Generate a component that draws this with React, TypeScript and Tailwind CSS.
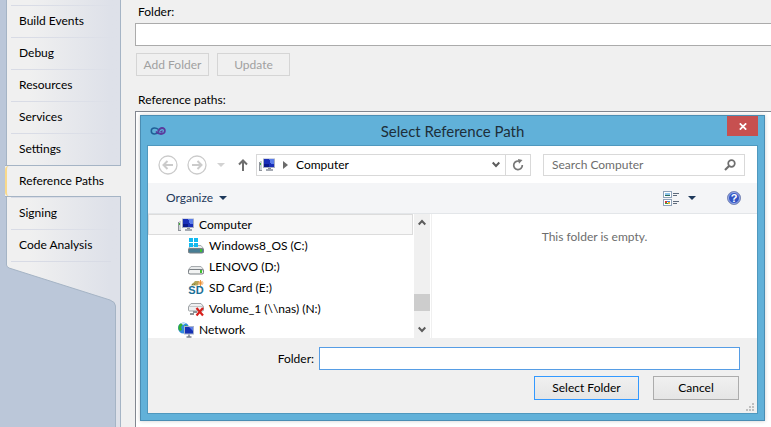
import React from "react";

const sections = [
  "Build Events",
  "Debug",
  "Resources",
  "Services",
  "Settings",
  "Reference Paths",
  "Signing",
  "Code Analysis",
];

function ComputerIcon() {
  return (
    <svg width="16" height="16" viewBox="0 0 16 16" shapeRendering="crispEdges" aria-hidden="true">
      <rect x="0" y="5" width="3" height="9" fill="#8f949b" />
      <rect x="1" y="4" width="2" height="9" fill="#cfd3d7" />
      <rect x="1" y="6" width="1" height="2" fill="#3fae3a" />
      <rect x="4" y="1" width="12" height="10" fill="#a9b0c2" />
      <rect x="4" y="1" width="12" height="1" fill="#d3d7e2" />
      <rect x="5" y="2" width="10" height="8" fill="#1a2fb8" />
      <path d="M10 2h5v5h-3z" fill="#5b7eea" />
      <path d="M5 7h5v3H5z" fill="#0b1a8c" />
      <rect x="9" y="11" width="3" height="1" fill="#8a8f99" />
      <rect x="7" y="12" width="7" height="2" fill="#a4a9b2" />
    </svg>
  );
}

function DriveBody({ color }: { color: string }) {
  return (
    <>
      <path d="M3 7.500h10l2.500 3v4h-15v-4z" fill="#e8eaeb" stroke="#a9adb0" />
      <rect x=".5" y="10.500" width="15" height="4.500" rx="1.500" fill={color} stroke="#7b8085" />
      <rect x="12" y="11" width="2" height="3" fill="#3fc030" />
    </>
  );
}

function WindowsDriveIcon() {
  return (
    <svg width="16" height="16" viewBox="0 0 16 16" aria-hidden="true">
      <DriveBody color="#477d94" />
      <path d="M1 0h4v4H1zM6 0h4v4H6zM1 5h4v4H1zM6 5h4v4H6z" fill="#12b9f0" />
    </svg>
  );
}

function DriveIcon() {
  return (
    <svg width="16" height="16" viewBox="0 0 16 16" aria-hidden="true">
      <DriveBody color="#f2f3f3" />
    </svg>
  );
}

function SdIcon() {
  return (
    <svg className="overflow-visible" width="16" height="16" viewBox="0 0 16 16" aria-hidden="true">
      <path d="M3 5.500L7 1h4l-1 4.500z" fill="#b3a85c" />
      <path d="M4 5l1-1.500M6 5l1-1.500" stroke="#7d7433" />
      <path d="M12.500 0v6M9.500 3h6M10.500 1l4 4M14.500 1l-4 4" stroke="#ea8b2d" strokeWidth=".9" />
      <text
        x="8"
        y="14"
        textAnchor="middle"
        className="fill-[#1b6f97] font-['Liberation_Sans',sans-serif] text-[11px] font-bold"
      >
        SD
      </text>
    </svg>
  );
}

function OfflineDriveIcon() {
  return (
    <svg width="16" height="16" viewBox="0 0 16 16" aria-hidden="true">
      <path d="M3 2.500h10l2.500 3v3.500q0 1-1 1h-13q-1 0-1-1V5.500z" fill="#eeeff0" stroke="#9fa3a6" />
      <path d="M1 5.500h14" stroke="#c4c7c9" />
      <path d="M5 10h4v2H6v2H2v-2h3z" fill="#8f9396" />
      <path d="M8.500 7l6.500 7.500M15 7l-6.500 7.500" stroke="#d8201c" strokeWidth="2.200" />
    </svg>
  );
}

function NetworkIcon() {
  return (
    <svg width="16" height="16" viewBox="0 0 16 16" aria-hidden="true">
      <circle cx="5.500" cy="6" r="5.500" fill="#2f8be0" />
      <path d="M1 3c2-2 3-2 4-1L4 4 3 5l1 3-2 1C0 8 0 5 1 3zM7 3l3 1v2L7 6z" fill="#35b12d" />
      <path d="M3 1.200c2-1 4-1 5 0L5 3z" fill="#c8e6f8" />
      <rect x="6" y="4" width="10" height="8.500" fill="#a9b3ca" />
      <rect x="7" y="5" width="8" height="6.500" fill="#1630b4" />
      <path d="M11 5h4v4z" fill="#5d7fe8" />
      <path d="M11 12.500v2M8.500 15h5" stroke="#7d8490" strokeWidth="1.500" />
    </svg>
  );
}

function Chevron({ up = false }: { up?: boolean }) {
  return (
    <svg width="8" height="7" viewBox="0 0 8 7" aria-hidden="true">
      <path d={up ? "M.7 5.500L4 2l3.300 3.500" : "M.7 1.500L4 5l3.300-3.500"} fill="none" stroke="#5c5c5c" strokeWidth="2" />
    </svg>
  );
}

function NavArrow({ back = false }: { back?: boolean }) {
  return (
    <svg width="20" height="20" viewBox="0 0 20 20" fill="none" stroke="#cbcbcb" aria-hidden="true">
      <circle cx="10" cy="10" r="9" strokeWidth="1.300" />
      <path d={back ? "M15 10H6M9.500 6L5.500 10l4 4" : "M5 10h9M10.500 6l4 4-4 4"} strokeWidth="2" />
    </svg>
  );
}

const places = [
  { name: "Computer", icon: <ComputerIcon />, root: true, selected: true },
  { name: "Windows8_OS (C:)", icon: <WindowsDriveIcon /> },
  { name: "LENOVO (D:)", icon: <DriveIcon /> },
  { name: "SD Card (E:)", icon: <SdIcon /> },
  { name: "Volume_1 (\\\\nas) (N:)", icon: <OfflineDriveIcon /> },
  { name: "Network", icon: <NetworkIcon />, root: true },
];

function Sidebar() {
  return (
    <aside className="flex w-[121px] shrink-0 flex-col bg-[#bbc7d9] pl-[6px]">
      <nav className="bg-linear-to-r from-[#f0f0f0] from-20% to-[#dee1e9] to-90%">
        <ul>
          <li className="h-[5px] border-x border-[#a5b4c5]" />
          {sections.map((name) =>
            name === "Reference Paths" ? (
              <li key={name} className="-ml-px h-8 border-y border-[#a5b4c5] bg-[#f0f0f0]">
                <a
                  href="#reference-paths"
                  aria-current="page"
                  className="flex h-full items-center rounded-l-sm border-l-2 border-[#f8d98c] pl-3"
                >
                  {name}
                </a>
              </li>
            ) : (
              <li key={name} className="flex h-8 flex-col border-x border-[#a5b4c5]">
                <span className="ml-1 h-px bg-linear-to-r from-[#d8dbe5] to-[#dee1e9]" />
                <a href="#section" className="flex flex-1 items-center pb-0.5 pl-3">
                  {name}
                </a>
              </li>
            ),
          )}
        </ul>
      </nav>
      <svg className="block h-[166px] w-[115px] shrink-0" viewBox="0 0 115 166" aria-hidden="true">
        <defs>
          <linearGradient id="tabFade" gradientUnits="userSpaceOnUse" x1="0" x2="115">
            <stop offset=".2" stopColor="#f0f0f0" />
            <stop offset=".9" stopColor="#dee1e9" />
          </linearGradient>
        </defs>
        <path
          d="M.5 -1V4Q.5 5.500 3 7L104 39Q109.500 41 109.500 45V167H114.500V-1"
          fill="url(#tabFade)"
          stroke="#a5b4c5"
        />
        <path d="M5 .5H105" stroke="#d8dbe5" />
      </svg>
    </aside>
  );
}

function TitleBar() {
  return (
    <header className="grid h-[29px] grid-cols-[1fr_auto_1fr] items-center">
      <svg className="ml-[3px]" width="16" height="8" viewBox="0 0 16 8" fill="none" aria-hidden="true">
        <path d="M8.500 2.500C7 1.200 6 1 4.500 1 .2 1 .2 7 4.500 7 6.500 7 8 6 9 4.500" stroke="#1f5f96" strokeWidth="1.500" />
        <path d="M6 4.500C7.500 6.500 9 7 11 7c5 0 5-6 1-6C10 1 9 2.500 8 4.500" stroke="#5a3a9c" strokeWidth="1.800" />
        <path d="M9.500 5l3-2v3z" fill="#5a3a9c" />
      </svg>
      <h1 className="text-[15px] leading-5 text-[#1d2f3a]">Select Reference Path</h1>
      <button
        type="button"
        aria-label="Close"
        className="flex h-5 w-[31px] items-center justify-center self-start justify-self-end bg-[#c75050]"
      >
        <svg width="8" height="7" viewBox="0 0 8 7" aria-hidden="true">
          <path d="M.8 .3l6.400 6.400M7.200 .3L.8 6.700" stroke="#fff" strokeWidth="1.700" />
        </svg>
      </button>
    </header>
  );
}

function NavigationBar() {
  return (
    <div className="flex h-[37px] items-center bg-white pr-3 pl-[10px]">
      <button type="button" aria-label="Back">
        <NavArrow back />
      </button>
      <button type="button" aria-label="Forward" className="ml-[9px]">
        <NavArrow />
      </button>
      <button type="button" aria-label="Recent locations" className="ml-[10px]">
        <svg width="8" height="4" viewBox="0 0 8 4" aria-hidden="true">
          <path d="M0 0h8L4 4z" fill="#d2d2d2" />
        </svg>
      </button>
      <button type="button" aria-label="Up" className="ml-[13px]">
        <svg width="10" height="12" viewBox="0 0 10 12" fill="none" stroke="#6e6e6e" strokeWidth="2" aria-hidden="true">
          <path d="M5 12V2M1 5.500L5 1.500l4 4" />
        </svg>
      </button>
      <div className="ml-2 flex h-[22px] min-w-0 flex-1 items-center border border-[#d9d9d9] pl-[2px]">
        <ComputerIcon />
        <svg className="ml-2" width="5" height="8" viewBox="0 0 5 8" aria-hidden="true">
          <path d="M0 0l5 4-5 4z" fill="#6b6b6b" />
        </svg>
        <button type="button" className="ml-2 flex-1 text-left">
          Computer
        </button>
        <button type="button" aria-label="Previous locations" className="px-[5px]">
          <Chevron />
        </button>
        <button
          type="button"
          aria-label="Refresh"
          className="flex h-full w-[25px] items-center justify-center border-l border-[#d9d9d9]"
        >
          <svg width="12" height="12" viewBox="0 0 12 12" aria-hidden="true">
            <path d="M8 2.500A4.300 4.300 0 1 0 10.300 6" fill="none" stroke="#777" strokeWidth="1.700" />
            <path d="M6 0l4.500 1L7 4.800z" fill="#777" />
          </svg>
        </button>
      </div>
      <div className="ml-3 flex h-[22px] w-[202px] shrink-0 items-center border border-[#d9d9d9] px-2">
        <input
          type="search"
          aria-label="Search Computer"
          placeholder="Search Computer"
          className="w-full min-w-0 flex-1 bg-transparent outline-none placeholder:text-[#6d6d6d]"
        />
        <svg width="12" height="12" viewBox="0 0 12 12" fill="none" stroke="#6e6e6e" aria-hidden="true">
          <circle cx="7.500" cy="4.500" r="3.300" strokeWidth="1.700" />
          <path d="M5 7L1 11" strokeWidth="2.200" />
        </svg>
      </div>
    </div>
  );
}

function Toolbar() {
  return (
    <div className="flex h-[31px] items-center border-b border-[#e3e6e9] bg-[#f4f5f7] pr-4 pl-[18px] text-[#1e395b]">
      <button type="button" className="flex items-center gap-[6px]">
        Organize
        <svg width="8" height="4" viewBox="0 0 8 4" aria-hidden="true">
          <path d="M0 0h8L4 4z" fill="#1e395b" />
        </svg>
      </button>
      <button type="button" aria-label="Change your view" className="ml-auto">
        <svg width="16" height="15" viewBox="0 0 16 15" shapeRendering="crispEdges" aria-hidden="true">
          <path d="M.5 .5h8v6h-8zM.5 8.500h8v6h-8z" fill="#fff" stroke="#8fa3ba" />
          <path d="M2 2h5v3H2z" fill="#8fc5ec" />
          <path d="M2 4h5v1H2z" fill="#2b6b58" />
          <path d="M2 10h2v2H2z" fill="#d63b2c" />
          <path d="M4 10h3v1H4z" fill="#3e7de0" />
          <path d="M2 12h3v1H2z" fill="#3c9f3e" />
          <path d="M5 11h2v2H5z" fill="#e8b42c" />
          <path d="M10 2.500h6M10 4.500h4M10 10.500h6M10 12.500h4" stroke="#5e6b7c" />
        </svg>
      </button>
      <button type="button" aria-label="More options" className="ml-[9px]">
        <svg width="8" height="4" viewBox="0 0 8 4" aria-hidden="true">
          <path d="M0 0h8L4 4z" fill="#1e395b" />
        </svg>
      </button>
      <button type="button" aria-label="Get help" className="ml-[31px]">
        <svg width="14" height="14" viewBox="0 0 14 14" aria-hidden="true">
          <circle cx="7" cy="7" r="6.500" fill="#3355c4" stroke="#7f8cb5" />
          <circle cx="7" cy="7" r="5.500" fill="none" stroke="#b9c6f0" strokeWidth=".8" />
          <text
            x="7"
            y="11"
            textAnchor="middle"
            className="fill-white font-['Liberation_Sans',sans-serif] text-[11px] font-bold"
          >
            ?
          </text>
        </svg>
      </button>
    </div>
  );
}

function Browser() {
  return (
    <div className="flex h-[124px] overflow-hidden bg-white">
      <ul className="w-[265px] shrink-0">
        {places.map((place) => (
          <li
            key={place.name}
            className={
              place.selected
                ? "h-[21px] border border-[#dcdcdc] bg-[#f7f7f7]"
                : "h-[21px] border border-transparent"
            }
          >
            <button
              type="button"
              className={
                place.root
                  ? "flex h-full w-full items-center gap-[5px] pl-[29px]"
                  : "flex h-full w-full items-center gap-[5px] pl-[39px]"
              }
            >
              {place.icon}
              {place.name}
            </button>
          </li>
        ))}
      </ul>
      <div className="ml-px flex w-4 shrink-0 flex-col items-center bg-[#f0f0f0] py-[5px]">
        <Chevron up />
        <div className="mt-[68px] h-[17px] w-full bg-[#cdcdcd]" />
        <div className="mt-auto flex">
          <Chevron />
        </div>
      </div>
      <p className="ml-px flex-1 border-l border-[#f0f0f0] pt-[15px] text-center text-[#6d6d6d]">
        This folder is empty.
      </p>
    </div>
  );
}

function Footer() {
  return (
    <footer className="bg-[#f0f0f0] pt-[9px] pb-[2px]">
      <div className="flex items-center pr-[17px]">
        <label htmlFor="dialog-folder" className="w-[171px] shrink-0 pr-[5px] text-right">
          Folder:
        </label>
        <input
          id="dialog-folder"
          type="text"
          className="h-[23px] min-w-0 flex-1 border border-[#569de5] bg-white px-1 outline-none"
        />
      </div>
      <div className="mt-[6px] flex justify-end gap-[14px] pr-[18px]">
        <button
          type="button"
          className="h-6 w-[105px] border border-[#3399ff] bg-linear-to-b from-[#f0f0f0] to-[#e5e5e5]"
        >
          Select Folder
        </button>
        <button
          type="button"
          className="h-6 w-[86px] border border-[#acacac] bg-linear-to-b from-[#f0f0f0] to-[#e5e5e5]"
        >
          Cancel
        </button>
      </div>
      <svg className="mt-[3px] mr-[3px] ml-auto block" width="8" height="8" viewBox="0 0 8 8" aria-hidden="true">
        <path d="M6 0h2v2H6zM3 3h2v2H3zM6 3h2v2H6zM0 6h2v2H0zM3 6h2v2H3zM6 6h2v2H6z" fill="#bfbfbf" />
      </svg>
    </footer>
  );
}

function SelectPathDialog() {
  return (
    <section
      role="dialog"
      aria-label="Select Reference Path"
      className="absolute top-[3px] right-[6px] left-1 border border-[#4a8db3] bg-[#61b1d9] shadow-[0_0_4px_rgba(0,0,0,0.2)]"
    >
      <div className="px-[6px] pb-[6px]">
        <TitleBar />
        <div className="border border-[#4f98be]">
          <NavigationBar />
          <Toolbar />
          <Browser />
          <Footer />
        </div>
      </div>
    </section>
  );
}

export default function App() {
  return (
    <div className="flex h-screen overflow-hidden bg-[#f0f0f0] font-['Lato','Open_Sans',sans-serif] text-[12px] leading-4 text-black">
      <Sidebar />
      <main className="flex min-w-0 flex-1 flex-col pt-1 pl-[14px]">
        <label htmlFor="folder" className="pl-[3px]">
          Folder:
        </label>
        <input
          id="folder"
          type="text"
          className="mt-[3px] h-[23px] shrink-0 border border-r-0 border-[#ababab] bg-white px-1 outline-none"
        />
        <div className="mt-[7px] flex gap-2 pl-px text-[#a0a0a0]">
          <button type="button" disabled className="h-[23px] w-[73px] border border-[#d5d5d5]">
            Add Folder
          </button>
          <button type="button" disabled className="h-[23px] w-[73px] border border-[#d5d5d5]">
            Update
          </button>
        </div>
        <h2 className="mt-4 pl-[3px]">Reference paths:</h2>
        <div className="relative mt-[3px] flex-1 border-t border-l border-[#828790] bg-white">
          <SelectPathDialog />
        </div>
      </main>
    </div>
  );
}
